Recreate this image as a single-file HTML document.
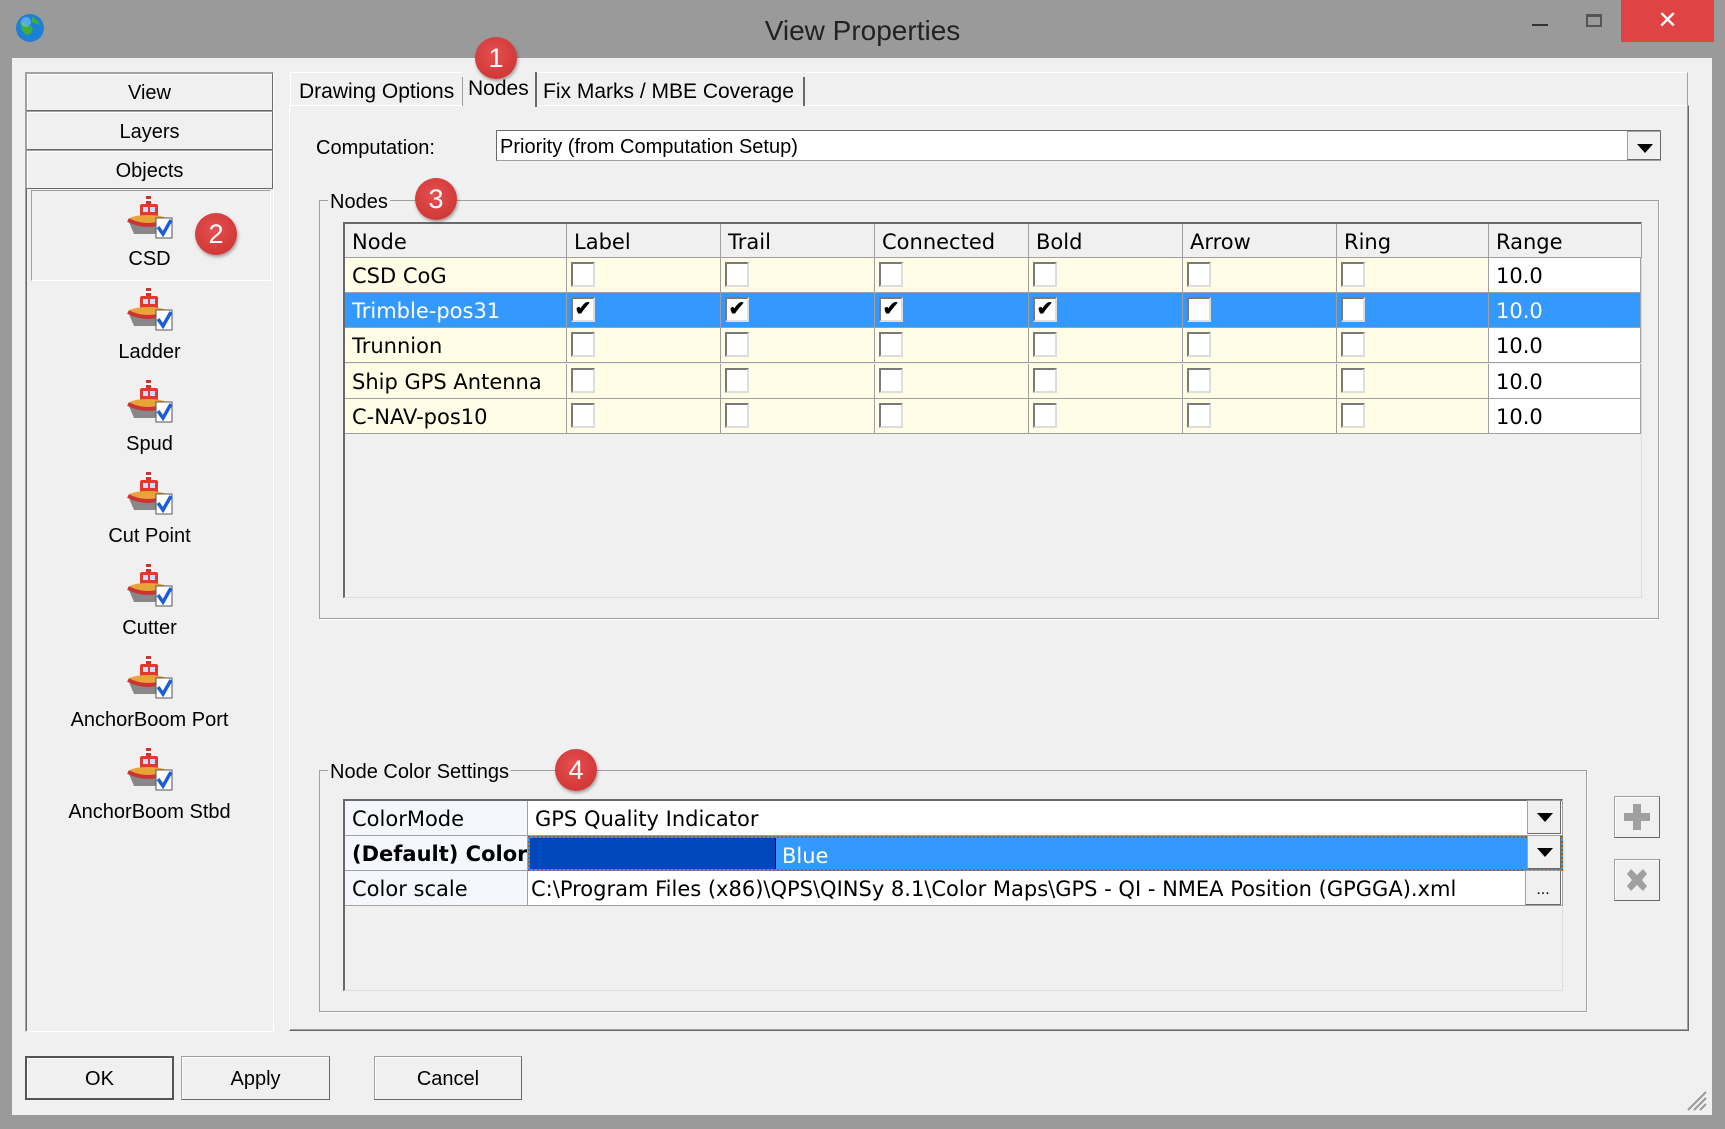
<!DOCTYPE html>
<html><head><meta charset="utf-8"><style>
*{box-sizing:border-box;margin:0;padding:0}
body{width:1725px;height:1129px;background:#9a9a9a;font-family:"Liberation Sans",sans-serif;position:relative;overflow:hidden;color:#000}
.a{position:absolute}
.client{left:12px;top:58px;width:1700px;height:1057px;background:#f0f0f0}
.btn{background:#f0f0f0;border:1px solid #a0a0a0;border-right-color:#696969;border-bottom-color:#696969;box-shadow:inset 1px 1px #fff;display:flex;align-items:center;justify-content:center;font-size:20px}
.badge{width:42px;height:42px;border-radius:50%;background:radial-gradient(circle at 45% 40%,#e65050,#c92f2f);color:#fff;font-size:27px;display:flex;align-items:center;justify-content:center;box-shadow:1px 2px 3px rgba(0,0,0,.35);z-index:5}
.g{font-family:"DejaVu Sans",sans-serif;font-size:21px}
.cell{position:absolute;border-right:1px solid #a0a0a0;border-bottom:1px solid #a0a0a0;height:35px;line-height:33px;padding-left:7px;padding-top:2px;white-space:nowrap;overflow:hidden}
.cb{position:absolute;width:24px;height:25px;background:#fff;border:2px solid #7a7a7a;border-right-color:#ddd;border-bottom-color:#ddd;font-size:20px;line-height:20px;text-align:center;font-weight:bold}
.item{position:absolute;left:25px;width:249px;text-align:center;font-size:20px}
.grp{border:1px solid #a0a0a0;box-shadow:1px 1px #fff}
.glabel{background:#f0f0f0;padding:0 2px;font-size:20px}
.dd{position:absolute;width:34px;background:#f0f0f0;border:1px solid #a0a0a0;border-right-color:#696969;border-bottom-color:#696969}
.dd:after{content:"";position:absolute;left:9px;top:12px;border-left:8px solid transparent;border-right:8px solid transparent;border-top:9px solid #000}
</style></head><body>
<svg class="a" style="left:14px;top:12px" width="32" height="32"><circle cx="16" cy="16" r="14" fill="#1e7fd6"/><path d="M6 10c5 0 6 4 10 4s3 6 0 8-6 0-8-4zM18 5c4 1 6 4 8 8-3 0-5-3-8-2z" fill="#3fae3a"/><circle cx="12" cy="10" r="5" fill="#8fd0ff" opacity=".5"/></svg>
<div class="a" style="left:0;width:1725px;top:15px;text-align:center;font-size:28px;color:#222">View Properties</div>
<div class="a" style="left:1532px;top:24px;width:16px;height:2px;background:#333"></div>
<div class="a" style="left:1586px;top:14px;width:16px;height:13px;border:2px solid #555;border-top-width:3px"></div>
<div class="a" style="left:1621px;top:0;width:93px;height:42px;background:#e04343;color:#fff;font-size:24px;text-align:center;line-height:42px">✕</div>
<div class="a client"></div>
<div class="a" style="left:25px;top:72px;width:249px;height:960px;border:1px solid #a0a0a0;border-right-color:#fff;border-bottom-color:#fff;box-shadow:inset 1px 1px #696969"></div>
<div class="a btn" style="left:26px;top:73px;width:247px;height:38px;padding-top:3px">View</div>
<div class="a btn" style="left:26px;top:111px;width:247px;height:39px;padding-top:3px">Layers</div>
<div class="a btn" style="left:26px;top:150px;width:247px;height:39px;padding-top:3px">Objects</div>
<div class="a" style="left:31px;top:190px;width:240px;height:91px;border:1px solid #a0a0a0;border-right-color:#fff;border-bottom-color:#fff"></div>
<svg width="0" height="0" style="position:absolute"><defs><g id="boat"><rect x="20" y="0" width="5" height="8" fill="#c33"/><rect x="20" y="3" width="5" height="2" fill="#fff"/><rect x="14" y="8" width="18" height="14" rx="2" fill="#e03a2a"/><rect x="17" y="11" width="5" height="5" fill="#bfe4ff"/><rect x="24" y="11" width="5" height="5" fill="#bfe4ff"/><path d="M2 24h40l-6 14H8z" fill="#888"/><ellipse cx="22" cy="24" rx="20" ry="5" fill="#e8a33a"/><path d="M2 24q20 10 40 0" stroke="#c33" stroke-width="4" fill="none"/><rect x="30" y="22" width="16" height="20" fill="#fff" stroke="#555"/><path d="M32 31l5 7 8-14" stroke="#1b5fd6" stroke-width="3.5" fill="none"/></g></defs></svg>
<svg class="a" style="left:126px;top:196px" width="48" height="44"><use href="#boat"/></svg><div class="item" style="top:248px">CSD</div>
<svg class="a" style="left:126px;top:288px" width="48" height="44"><use href="#boat"/></svg><div class="item" style="top:341px">Ladder</div>
<svg class="a" style="left:126px;top:380px" width="48" height="44"><use href="#boat"/></svg><div class="item" style="top:433px">Spud</div>
<svg class="a" style="left:126px;top:472px" width="48" height="44"><use href="#boat"/></svg><div class="item" style="top:525px">Cut Point</div>
<svg class="a" style="left:126px;top:564px" width="48" height="44"><use href="#boat"/></svg><div class="item" style="top:617px">Cutter</div>
<svg class="a" style="left:126px;top:656px" width="48" height="44"><use href="#boat"/></svg><div class="item" style="top:709px">AnchorBoom Port</div>
<svg class="a" style="left:126px;top:748px" width="48" height="44"><use href="#boat"/></svg><div class="item" style="top:801px">AnchorBoom Stbd</div>
<div class="a badge" style="left:195px;top:213px">2</div>
<div class="a" style="left:289px;top:105px;width:1400px;height:926px;border:1px solid #fff;border-right-color:#696969;border-bottom-color:#696969;box-shadow:inset -1px -1px #a0a0a0"></div>
<div class="a" style="left:290px;top:72px;width:1398px;height:34px;border:1px solid #fff;border-bottom:none;border-right-color:#a0a0a0"></div>
<div class="a" style="left:293px;top:77px;width:170px;height:29px;font-size:21px;line-height:30px;padding-left:6px;border-right:1px solid #a0a0a0">Drawing Options</div>
<div class="a" style="left:463px;top:72px;width:74px;height:35px;font-size:21px;line-height:34px;padding-left:5px;background:#f0f0f0;border-right:2px solid #696969">Nodes</div>
<div class="a" style="left:537px;top:77px;width:268px;height:29px;font-size:21px;line-height:30px;padding-left:6px;border-right:2px solid #696969">Fix Marks / MBE Coverage</div>
<div class="a badge" style="left:475px;top:37px">1</div>
<div class="a" style="left:316px;top:137px;font-size:20px">Computation:</div>
<div class="a" style="left:496px;top:130px;width:1165px;height:31px;background:#fff;border:1px solid #a0a0a0;border-top-color:#696969;border-left-color:#696969;font-size:20px;line-height:32px;padding-left:3px">Priority (from Computation Setup)</div>
<div class="dd" style="left:1627px;top:131px;height:29px"></div>
<div class="a grp" style="left:319px;top:200px;width:1340px;height:419px"></div>
<div class="a glabel" style="left:328px;top:191px">Nodes</div>
<div class="a badge" style="left:415px;top:178px">3</div>
<div class="a g" style="left:343px;top:222px;width:1299px;height:376px;background:#f0f0f0;border:2px solid #696969;border-right:1px solid #ddd;border-bottom:1px solid #ddd">
<div class="cell" style="left:0;top:0;width:222px;height:34px">Node</div>
<div class="cell" style="left:222px;top:0;width:154px;height:34px">Label</div>
<div class="cell" style="left:376px;top:0;width:154px;height:34px">Trail</div>
<div class="cell" style="left:530px;top:0;width:154px;height:34px">Connected</div>
<div class="cell" style="left:684px;top:0;width:154px;height:34px">Bold</div>
<div class="cell" style="left:838px;top:0;width:154px;height:34px">Arrow</div>
<div class="cell" style="left:992px;top:0;width:152px;height:34px">Ring</div>
<div class="cell" style="left:1144px;top:0;width:153px;height:34px">Range</div>
</div>
<div id="rows"></div>
<div class="a grp" style="left:319px;top:770px;width:1268px;height:242px"></div>
<div class="a glabel" style="left:328px;top:761px">Node Color Settings</div>
<div class="a badge" style="left:555px;top:749px">4</div>
<div class="a g" style="left:343px;top:799px;width:1220px;height:192px;background:#f0f0f0;border:2px solid #696969;border-right:1px solid #ddd;border-bottom:1px solid #ddd">
<div class="cell" style="left:0;top:0;width:183px;background:#f4f7fc">ColorMode</div>
<div class="cell" style="left:183px;top:0;width:1035px;background:#fff">GPS Quality Indicator</div>
<div class="cell" style="left:0;top:35px;width:183px;background:#f4f7fc;font-weight:bold">(Default) Color</div>
<div class="cell" style="left:183px;top:35px;width:1035px;background:#3399ff;padding:0;border:2px dotted #b35d00"><div style="position:absolute;left:0;top:0;width:246px;height:31px;background:#0047bb;border-right:1px solid #000"></div><span style="position:absolute;left:252px;top:2px;color:#fff">Blue</span></div>
<div class="cell" style="left:0;top:70px;width:183px;background:#f4f7fc">Color scale</div>
<div class="cell" style="left:183px;top:70px;width:1035px;background:#fff;padding-left:3px">C:\Program Files (x86)\QPS\QINSy 8.1\Color Maps\GPS - QI - NMEA Position (GPGGA).xml</div>
</div>
<div class="dd" style="left:1527px;top:800px;height:34px"></div>
<div class="dd" style="left:1527px;top:835px;height:34px"></div>
<div class="a" style="left:1525px;top:870px;width:36px;height:35px;background:#f0f0f0;border:1px solid #a0a0a0;border-right-color:#696969;border-bottom-color:#696969;text-align:center;font-size:16px;line-height:38px">...</div>
<div class="a btn" style="left:1614px;top:796px;width:46px;height:42px"><svg width="30" height="30"><path d="M11 2h8v9h9v8h-9v9h-8v-9H2v-8h9z" fill="#a0a0a0"/></svg></div>
<div class="a btn" style="left:1614px;top:859px;width:46px;height:42px"><svg width="30" height="30"><path d="M5 9l4-5 6 6 6-6 4 5-5 6 5 6-4 5-6-6-6 6-4-5 5-6z" fill="#a0a0a0"/></svg></div>
<div class="a btn" style="left:25px;top:1056px;width:149px;height:44px;border:2px solid #555;padding-top:2px">OK</div>
<div class="a btn" style="left:181px;top:1056px;width:149px;height:44px;padding-top:2px">Apply</div>
<div class="a btn" style="left:374px;top:1056px;width:148px;height:44px;padding-top:2px">Cancel</div>
<svg class="a" style="left:1684px;top:1088px" width="24" height="24"><path d="M22 4L4 22M22 10L10 22M22 16L16 22" stroke="#999" stroke-width="2"/></svg>
<script>
var names=["CSD CoG","Trimble-pos31","Trunnion","Ship GPS Antenna","C-NAV-pos10"];
var cols=[222,376,530,684,838,992];var h="";
for(var i=0;i<5;i++){var t=258+i*35.2,sel=i==1,bg=sel?"#3399ff":"#fffde6",fc=sel?"#fff":"#000";
h+='<div class="a g cell" style="left:345px;top:'+t+'px;width:222px;background:'+bg+';color:'+fc+'">'+names[i]+'</div>';
for(var c=0;c<6;c++){var w=c==5?152:154;h+='<div class="a cell" style="left:'+(345+cols[c])+'px;top:'+t+'px;width:'+w+'px;background:'+bg+'"></div>';
h+='<div class="cb" style="left:'+(349+cols[c])+'px;top:'+(t+4)+'px">'+(sel&&c<4?'✔':'')+'</div>';}
h+='<div class="a g cell" style="left:1489px;top:'+t+'px;width:152px;background:'+(sel?"#3399ff":"#fff")+';color:'+fc+'">10.0</div>';}
document.getElementById("rows").innerHTML=h;
</script>
</body></html>
